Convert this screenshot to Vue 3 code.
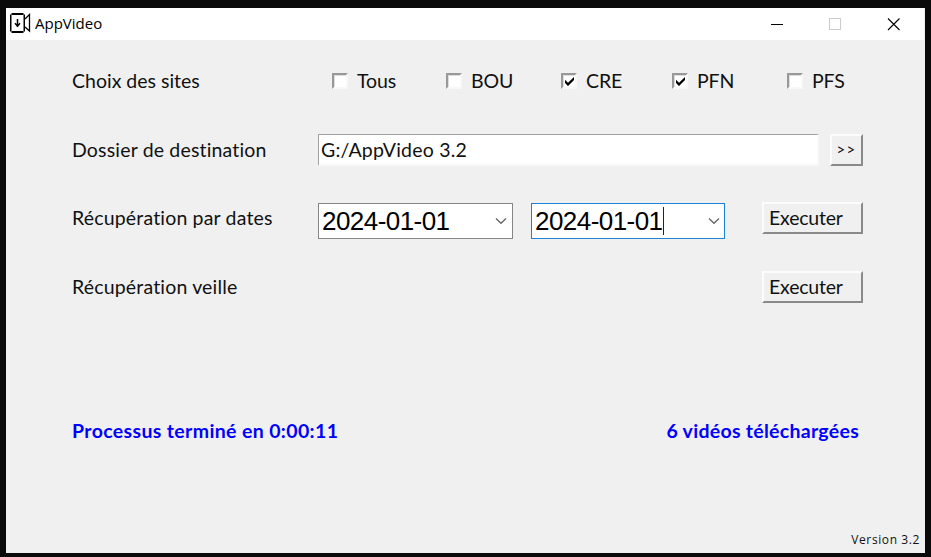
<script setup>
import { ref } from 'vue'

const sites = ref([
  { name: 'Tous', checked: false },
  { name: 'BOU', checked: false },
  { name: 'CRE', checked: true },
  { name: 'PFN', checked: true },
  { name: 'PFS', checked: false },
])
const dates = ref([
  { value: '2024-01-01', focused: false },
  { value: '2024-01-01', focused: true },
])
</script>

<template>
  <div class="desktop">
    <div class="window">
      <header class="titlebar">
        <svg class="logo" width="21" height="20" viewBox="0 0 21 20" fill="none" stroke="#000">
          <path d="M1.500 1H13.500M1.500 19H13.500" stroke-width="2" />
          <path d="M.75 1.500V18.500M14.250 1.500V18.500" stroke-width="1.5" />
          <path d="M15 6L19.500 1.500V18L15 14" stroke-width="1.3" />
          <path d="M7.500 6V14M5 10.200L7.500 13.200L10 10.200" stroke-width="1.5" />
        </svg>
        <span class="title">AppVideo</span>
        <svg class="controls" width="132" height="13" viewBox="0 0 132 13" fill="none">
          <path d="M0 6.5H12" stroke="#000" />
          <rect x="58.5" y=".5" width="11" height="11" stroke="#ccc" />
          <path d="M117 .5L128.500 12M128.500 .5L117 12" stroke="#000" stroke-width="1.1" />
        </svg>
      </header>

      <main class="body">
        <div class="row upper">
          <span class="label">Choix des sites</span>
          <div class="sites">
            <div v-for="s in sites" :key="s.name" class="site">
              <span class="check">
                <svg v-if="s.checked" width="9" height="9" viewBox="0 0 9 9">
                  <path d="M0 2.800L3 5.800L9 0V3L3 9L0 6Z" fill="#000" />
                </svg>
              </span>
              <span class="name">{{ s.name }}</span>
            </div>
          </div>
        </div>

        <div class="row upper">
          <span class="label wide">Dossier de destination</span>
          <div class="path">G:/AppVideo 3.2</div>
          <div class="button browse">&gt;&gt;</div>
        </div>

        <div class="row">
          <span class="label wide">Récupération par dates</span>
          <div v-for="(d, i) in dates" :key="i" class="combo" :class="{ focused: d.focused }">
            <span class="date">{{ d.value }}</span>
            <span v-if="d.focused" class="caret"></span>
            <svg class="chevron" width="12" height="8" viewBox="0 0 12 8" fill="none">
              <path d="M1 1.500L6 6.300L11 1.500" stroke="#666" stroke-width="1.3" />
            </svg>
          </div>
          <div class="button run">Executer</div>
        </div>

        <div class="row">
          <span class="label wide">Récupération veille</span>
          <div class="button run">Executer</div>
        </div>

        <div class="status">
          <span class="elapsed">Processus terminé en 0:00:11</span>
          <span class="count">6 vidéos téléchargées</span>
        </div>
        <footer class="version">Version 3.2</footer>
      </main>
    </div>
  </div>
</template>

<style>
body {
  background: #0a0a0a;
}
</style>

<style scoped>
.desktop {
  box-sizing: border-box;
  width: 931px;
  height: 557px;
  padding: 8px 6px 4px;
  background: #0a0a0a;
  overflow: hidden;
}
.desktop * {
  box-sizing: border-box;
}
.window {
  width: 919px;
  height: 545px;
  display: flex;
  flex-direction: column;
  background: #f0f0f0;
  font: 19.5px/24px Lato, "Noto Sans", sans-serif;
  font-variant-ligatures: none;
  color: #111;
  white-space: nowrap;
}
.titlebar {
  width: 918px;
  height: 32px;
  flex: none;
  display: flex;
  align-items: center;
  padding: 0 21px 0 4px;
  background: #fff;
}
.logo {
  margin-top: -2px;
}
.title {
  margin: -2px 0 0 4px;
  font: 15px/20px "Open Sans", sans-serif;
  color: #000;
}
.controls {
  margin-left: auto;
}
.body {
  flex: 1;
  display: flex;
  flex-direction: column;
  padding: 6px 5px 0 66px;
}
.row {
  height: 69px;
  width: 791px;
  display: flex;
  align-items: center;
}
.row.upper {
  padding-top: 1px;
}
.label {
  width: 246px;
  flex: none;
  padding-bottom: 1px;
}
.label.wide {
  letter-spacing: 0.17px;
}
.sites {
  display: grid;
  grid-template-columns: 114px 115px 111px 115px auto;
  padding-left: 14px;
}
.site {
  display: flex;
  align-items: center;
  gap: 9px;
}
.name {
  letter-spacing: -0.1px;
}
.check {
  width: 16px;
  height: 16px;
  flex: none;
  display: flex;
  align-items: center;
  justify-content: center;
  background: #fff;
  border: 2px solid;
  border-color: #999 #f8f8f8 #f8f8f8 #999;
  box-shadow: inset 1px 1px #ddd;
}
.path {
  width: 501px;
  height: 32px;
  padding: 3px 0 0 2px;
  background: #fff;
  border: 2px solid;
  border-color: #a0a0a0 #f8f8f8 #f8f8f8 #a0a0a0;
  border-top-width: 1px;
  border-left-width: 1px;
  letter-spacing: 0.22px;
}
.button {
  height: 32px;
  flex: none;
  margin-top: -1px;
  background: #f0f0f0;
  border: 2px solid;
  border-color: #fcfcfc #8a8a8a #8a8a8a #fcfcfc;
}
.button.browse {
  width: 33px;
  margin-top: 0;
  margin-left: auto;
  font-size: 15px;
  line-height: 27px;
  text-align: center;
  letter-spacing: 1.4px;
}
.run {
  width: 101px;
  margin-left: auto;
  padding-left: 5px;
  line-height: 27px;
  letter-spacing: -0.2px;
}
.combo {
  width: 195px;
  height: 36px;
  flex: none;
  margin: 5px 18px 0 0;
  padding: 0 5px 0 3px;
  display: flex;
  align-items: center;
  background: #fff;
  border: 1px solid #858585;
  font: 26px/34px "Liberation Sans", sans-serif;
  letter-spacing: -0.55px;
  color: #000;
}
.combo.focused {
  width: 194px;
  margin-right: 0;
  padding-right: 4px;
  border-color: #1c82d8;
}
.caret {
  width: 1px;
  height: 28px;
  background: #222;
}
.chevron {
  margin-left: auto;
}
.status {
  display: flex;
  justify-content: space-between;
  width: 787px;
  margin-top: 97px;
  font-weight: 700;
  color: #00f;
}
.elapsed {
  letter-spacing: 0.36px;
}
.count {
  letter-spacing: 0.28px;
}
.version {
  margin-top: auto;
  align-self: flex-end;
  padding-bottom: 3px;
  font: 12px/20px "Open Sans", sans-serif;
  letter-spacing: 0.6px;
}
</style>
